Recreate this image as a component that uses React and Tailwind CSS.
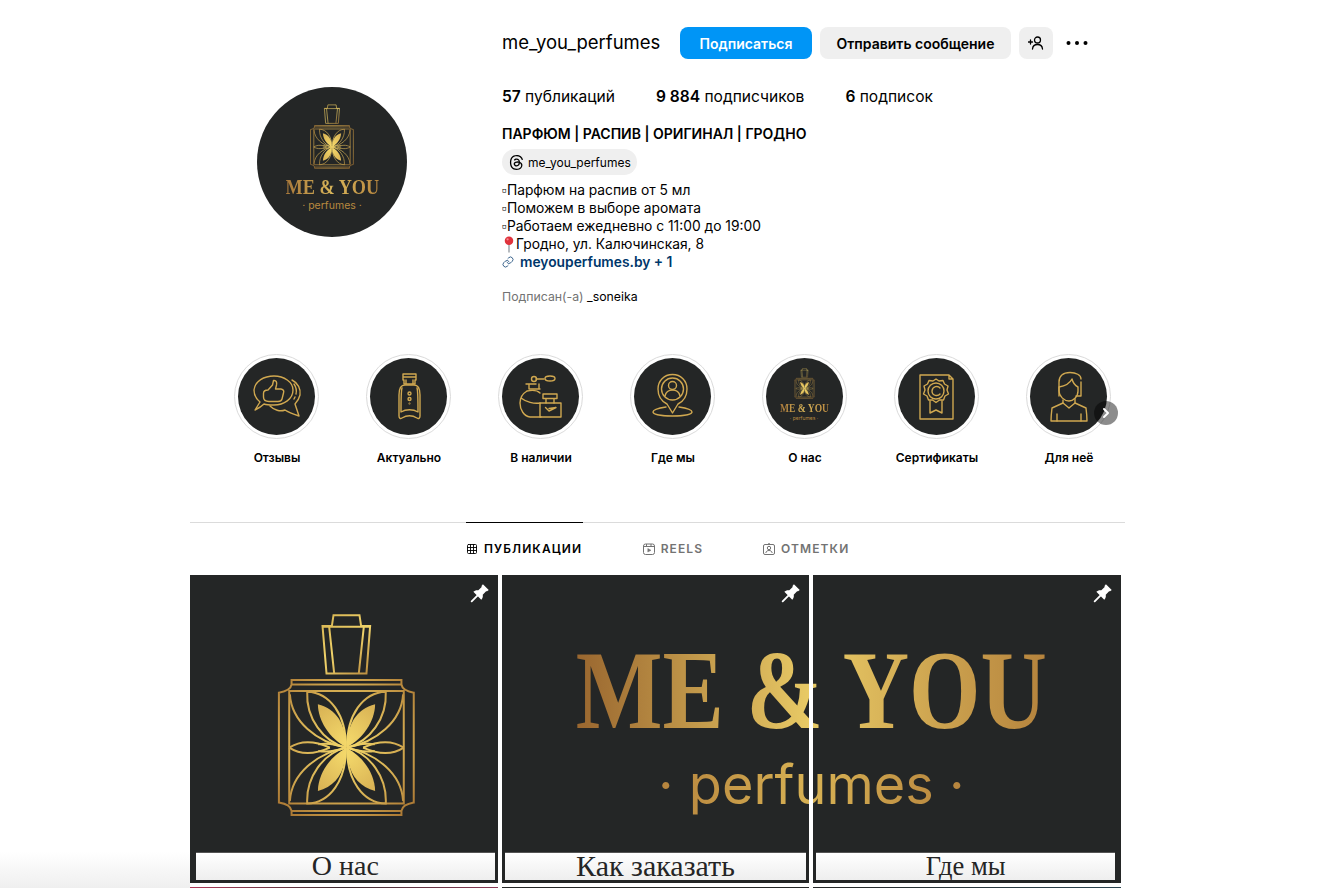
import React from "react";
import { Grid3x3, Link, ChevronRight } from "lucide-react";
import { SiThreads } from "react-icons/si";

const GOLD = "#d0a850";
const FLIPS = ["", "translate(940 0) scale(-1 1)", "translate(0 1036) scale(1 -1)", "translate(940 1036) scale(-1 -1)"];

// perfume bottle, drawn in the coordinates of the big tile (924 units = 308px)
const BottleShape = ({ id }) => (
  <>
    <defs>
      <radialGradient id={id} gradientUnits="userSpaceOnUse" cx="470" cy="500" r="300">
        <stop offset="0" stopColor="#f4d96b" />
        <stop offset="0.55" stopColor="#d2a94f" />
        <stop offset="1" stopColor="#a46f2f" />
      </radialGradient>
      <linearGradient id={id + "-cap"} gradientUnits="userSpaceOnUse" x1="400" y1="120" x2="540" y2="300">
        <stop offset="0" stopColor="#d7b452" />
        <stop offset="0.5" stopColor="#f0d36a" />
        <stop offset="1" stopColor="#b88a3e" />
      </linearGradient>
    </defs>
    <g fill="none" stroke={`url(#${id}-cap)`} strokeWidth="6">
      <path d="M431 120H509L514 153H541L530 295H410L398 153H426Z" />
      <path d="M398 155H541M418 155L433 295M522 155L507 295" />
    </g>
    <g fill="none" stroke={`url(#${id})`} strokeWidth="6">
      <path d="M305 315H635V328C637 342 655 350 672 353V683C655 686 637 694 635 708V720H305V708C303 694 285 686 267 683V353C285 350 303 342 305 328Z" />
      <path d="M298 348H642V686H298ZM305 328H635M305 708H635" />
      {FLIPS.map((t) => (
        <g key={t} transform={t}>
          <path d="M468 518C400 500 348 430 352 350C420 352 470 420 468 518" />
          <path d="M468 518C380 500 305 440 300 358" />
          <path d="M298 518C335 494 380 500 420 518" />
          <path d="M468 518C440 508 410 504 385 508" />
        </g>
      ))}
    </g>
    <g fill={`url(#${id})`}>
      {FLIPS.map((t) => (
        <path key={t} transform={t} d="M467 516C420 490 385 440 384 388C440 402 470 450 467 516Z" />
      ))}
    </g>
  </>
);

const MiniLogo = ({ id, bottleW, bottleH, nameSize, subSize, gap }) => (
  <div className="flex h-full w-full flex-col items-center justify-center">
    <svg width={bottleW} height={bottleH} viewBox="262 115 416 608">
      <BottleShape id={id} />
    </svg>
    <span
      className="scale-x-[0.83] whitespace-nowrap bg-linear-to-r from-[#a8783a] via-[#d9b65a] to-[#b8873f] bg-clip-text font-['Liberation_Serif',serif] font-bold leading-none text-transparent"
      style={{ fontSize: nameSize, marginTop: gap }}
    >
      ME &amp; YOU
    </span>
    <span className="whitespace-nowrap leading-none text-[#b8893f]" style={{ fontSize: subSize, marginTop: gap / 2 }}>
      · perfumes ·
    </span>
  </div>
);

const StoryIcon = ({ children }) => (
  <svg viewBox="0 0 77 77" className="h-full w-full" fill="none" stroke={GOLD} strokeWidth="1.400" strokeLinejoin="round" strokeLinecap="round">
    {children}
  </svg>
);

const stories = [
  {
    label: "Отзывы",
    icon: (
      <StoryIcon>
        <path d="M17 52L22 44C17 40 16 35 16 32C17 23 26 18 36 18C46 18 55 24 55 32C55 41 46 47 36 47C32 47 29 47 26 46C24 48 21 50 17 52Z" />
        <path d="M54 22C60 25 63 31 62 37C61 41 59 44 57 46L61 58C55 56 50 54 47 52C42 54 36 52 32 48" />
        <path d="M56 26C58 29 59 32 58 36M57 39L56 41" />
        <path d="M30 32L34.500 27L35.500 22.500C38.500 22 39 24.500 38.500 27L37.500 31H43C46 31.500 46 33.500 45.500 35L44 41C43.500 43 42 43.500 40 43.500H31C27 43.500 25.500 42 25.500 39V35.500C25.500 33 27.500 32 30 32Z" />
      </StoryIcon>
    ),
  },
  {
    label: "Актуально",
    icon: (
      <StoryIcon>
        <path d="M33 16H46V22H45V26H34V22H33ZM33 19H46M36 22V26M43 22V26" />
        <path d="M29 37C29 31 31 27 35 27H44C48 27 50 31 50 37V58C50 60.500 48.500 61 47 60C42 57 37 57 32 60C30.500 61 29 60.500 29 58Z" />
        <path d="M32 30C31 33 31 45 31 54C36 51 43 51 48 54C48 45 48 33 47 30" />
        <circle cx="39.500" cy="35.500" r="1.500" />
        <circle cx="39.500" cy="41" r="1.500" />
        <circle cx="39.500" cy="45.500" r="0.300" />
      </StoryIcon>
    ),
  },
  {
    label: "В наличии",
    icon: (
      <StoryIcon>
        <path d="M24 26H34M27 26V31M37 31V26M27 31H38" />
        <circle cx="32" cy="21" r="2.500" />
        <path d="M34 21H42" />
        <ellipse cx="48" cy="20.500" rx="5" ry="2.500" />
        <path d="M25 33C20 36 18 41 18 45C18 52 22 58 28 59H39M38 35C35 32 30 32 25 33M38 45C32 46 24 44 19 40" />
        <path d="M41 36H55V40.500H41ZM44 40.500V45M52 40.500V45" />
        <path d="M38 45H59V59H38Z" />
        <path d="M43.500 49.500L47 53L54 49.500L47 50.500" />
      </StoryIcon>
    ),
  },
  {
    label: "Где мы",
    icon: (
      <StoryIcon>
        <path d="M33 46C27 43 24 37 24 31C24 23 30 16.500 38.500 16.500C47 16.500 53 23 53 31C53 37 50 43 44 46L38.500 55Z" />
        <circle cx="38.500" cy="31" r="11" />
        <circle cx="38.500" cy="27.500" r="4" />
        <path d="M31 38C32 33.500 35 32 38.500 32C42 32 45 33.500 46 38" />
        <path d="M32 49C25 50 19 51.500 19 54C19 56.500 28 58 38.500 58C49 58 58 56.500 58 54C58 51.500 52 50 45 49" />
      </StoryIcon>
    ),
  },
  {
    label: "О нас",
    icon: (
      <div className="h-full w-full pb-[4px]">
        <MiniLogo id="story-logo" bottleW={21} bottleH={31} nameSize="11.500px" subSize="5px" gap={4} />
      </div>
    ),
  },
  {
    label: "Сертификаты",
    icon: (
      <StoryIcon>
        <path d="M22 17H51L55 21V61H22ZM51 17V21H55" />
        <path d="M38 21L41 23L45 22.500L46.500 26L50 28L49 32L50.500 36L47 38L45.500 42L41.500 42L38 44.500L34.500 42L30.500 42L29 38L25.500 36L27 32L26 28L29.500 26L31 22.500L35 23Z" />
        <circle cx="38" cy="33" r="8" />
        <path d="M42 30C40 27.500 34.500 28 34 33C34 38 40 38.500 42 36" />
        <path d="M32 43V55L38 52L44 55V43" />
      </StoryIcon>
    ),
  },
  {
    label: "Для неё",
    icon: (
      <StoryIcon>
        <path d="M29 38V24C29 18 33 14.500 40 14.500C46 14.500 51 17 51 21M51 24V38H46" />
        <path d="M29 29C35 28 40 25 42 21C43 25 46 28 48 29V33C48 39 43 43 39 43C34 43 29 38 29 33Z" />
        <path d="M33 42V45L22 50C21.500 54 21 58 21 63H57C57 58 56.500 54 56 50L45 45V41" />
        <path d="M33 45L39 50L45 45M27 56V63M51 56V63" />
      </StoryIcon>
    ),
  },
];

const PinIcon = () => (
  <svg viewBox="0 0 24 24" className="absolute right-2 top-2 h-5 w-5" fill="#fff">
    <path d="M15.500 1.500L22.500 8.500L20.500 10L19.300 9.800L15.300 14C15.800 16.500 15 18.500 13.500 20L4 10.500C5.500 9 7.500 8.300 10 8.700L14 4.700L13.800 3.500Z" />
    <path d="M9.500 14.500L2 22" stroke="#fff" strokeWidth="2.200" strokeLinecap="round" />
  </svg>
);

const Caption = ({ className, children }) => (
  <div className={`absolute bottom-[3px] flex h-[28px] items-center justify-center border-t border-[#555] bg-linear-to-b from-white to-[#eeeeee] pb-px font-['Liberation_Serif',serif] leading-none text-[#252525] ${className}`}>
    {children}
  </div>
);

const App = () => {
  return (
    <div className="relative h-screen overflow-hidden bg-white pl-[190px] font-[Inter,'Liberation_Sans',sans-serif] text-[#000]">
      <div className="w-[935px]">
        {/* header */}
        <header className="flex items-start pt-[27px]">
          <div className="mt-[60px] ml-[67px] mr-[95px] h-[150px] w-[150px] shrink-0 overflow-hidden rounded-full bg-[#242626] pb-[9px]">
            <MiniLogo id="avatar-logo" bottleW={44} bottleH={65} nameSize="22px" subSize="10.500px" gap={7} />
          </div>
          <div className="flex-1">
            <div className="flex h-[32px] items-center">
              <h1 className="mr-[20px] w-[158px] whitespace-nowrap text-[18.500px]">me_you_perfumes</h1>
              <button className="h-[32px] w-[132px] rounded-lg bg-[#0095f6] text-[14px] font-semibold text-white">Подписаться</button>
              <button className="ml-2 h-[32px] w-[191px] rounded-lg bg-[#efefef] text-[14px] font-semibold">Отправить сообщение</button>
              <button className="ml-2 flex h-[32px] w-[34px] items-center justify-center rounded-lg bg-[#efefef]">
                <svg viewBox="0 0 16 16" className="h-4 w-4" fill="none" stroke="#000" strokeWidth="1.300" strokeLinecap="round">
                  <path d="M0.500 7H4.500M2.500 5V9" />
                  <circle cx="9.500" cy="5" r="3" />
                  <path d="M4.500 14C4.800 10.500 7 9.500 9.500 9.500C12 9.500 14.200 10.500 14.500 14" />
                </svg>
              </button>
              <svg viewBox="0 0 24 24" className="ml-[12px] h-6 w-6" fill="#000">
                <circle cx="3.500" cy="12" r="2" />
                <circle cx="12" cy="12" r="2" />
                <circle cx="20.500" cy="12" r="2" />
              </svg>
            </div>

            <div className="mt-[28px] flex gap-[41px] text-[15.550px] leading-[20px]">
              <span><b className="font-semibold">57</b> публикаций</span>
              <span><b className="font-semibold">9 884</b> подписчиков</span>
              <span><b className="font-semibold">6</b> подписок</span>
            </div>

            <div className="mt-[18px] text-[14px] font-semibold leading-[18px]">ПАРФЮМ | РАСПИВ | ОРИГИНАЛ | ГРОДНО</div>

            <div className="mt-[6px] flex h-[26px] w-[135px] items-center gap-[4px] rounded-full bg-[#efefef] pl-[7px] pt-px text-[12px]">
              <SiThreads className="h-[15px] w-[15px] shrink-0" />
              <span>me_you_perfumes</span>
            </div>

            <div className="mt-[6px] text-[13.800px] leading-[18px]">
              <div>▫Парфюм на распив от 5 мл</div>
              <div>▫Поможем в выборе аромата</div>
              <div>▫Работаем ежедневно с 11:00 до 19:00</div>
              <div className="flex items-center">
                <svg viewBox="0 0 14 18" className="h-[17px] w-[14px] shrink-0">
                  <path d="M7 8V17.500" stroke="#9aa0a6" strokeWidth="1.500" />
                  <circle cx="7" cy="5" r="4.500" fill="#e0323c" />
                  <circle cx="5.500" cy="3.500" r="1.200" fill="#f58a90" />
                </svg>
                Гродно, ул. Калючинская, 8
              </div>
              <div className="flex items-center gap-[6px] font-semibold text-[#00376b]">
                <Link size={12} strokeWidth={1.500} />
                meyouperfumes.by + 1
              </div>
            </div>

            <div className="mt-[18px] text-[12.300px] leading-[16px] text-[#737373]">
              Подписан(-а) <span className="text-black">_soneika</span>
            </div>
          </div>
        </header>

        {/* highlights */}
        <section className="relative mt-[49px] flex pl-[20px]">
          {stories.map((s) => (
            <div key={s.label} className="flex w-[132px] shrink-0 flex-col items-center">
              <div className="flex h-[85px] w-[85px] items-center justify-center rounded-full border border-[#dbdbdb] bg-white">
                <div className="h-[77px] w-[77px] overflow-hidden rounded-full bg-[#242626]">{s.icon}</div>
              </div>
              <div className="mt-[11px] pl-[2px] text-[12px] font-semibold leading-[16px]">{s.label}</div>
            </div>
          ))}
          <div className="absolute left-[904px] top-[47px] flex h-[24px] w-[24px] items-center justify-center rounded-full bg-black/45">
            <ChevronRight size={16} strokeWidth={3} className="text-white" />
          </div>
        </section>

        {/* tabs */}
        <nav className="mt-[56px] flex h-[53px] justify-center gap-[60px] border-t border-[#dbdbdb] text-[12px] font-semibold uppercase leading-none tracking-[1.100px] text-[#737373]">
          <div className="-mt-px flex h-[53px] w-[117px] items-center justify-center gap-[6px] border-t border-black text-black">
            <Grid3x3 size={12} strokeWidth={1.800} />
            Публикации
          </div>
          <div className="flex items-center gap-[6px]">
            <svg viewBox="0 0 12 12" className="h-3 w-3" fill="none" stroke="#737373" strokeWidth="1">
              <rect x="0.500" y="1" width="11" height="10.500" rx="2" />
              <path d="M0.500 3.500H11.500M3.500 1V3.500M8 1V3.500" />
              <path d="M4.800 5.500L8 7.300L4.800 9Z" fill="#737373" strokeWidth="0.500" />
            </svg>
            Reels
          </div>
          <div className="flex items-center gap-[6px]">
            <svg viewBox="0 0 12 12" className="h-3 w-3" fill="none" stroke="#737373" strokeWidth="1">
              <rect x="0.500" y="1.500" width="11" height="10" rx="1.500" />
              <path d="M4.500 1.500L6 0.500L7.500 1.500" />
              <circle cx="6" cy="5" r="1.700" />
              <path d="M2.800 10C3.200 8 4.500 7.500 6 7.500C7.500 7.500 8.800 8 9.200 10" />
            </svg>
            Отметки
          </div>
        </nav>

        {/* posts */}
        <section className="grid w-[931px] grid-cols-3 gap-[4px]">
          <div className="relative h-[308px] bg-[#242626]">
            <svg viewBox="0 0 924 924" className="block h-full w-full">
              <BottleShape id="post-logo" />
            </svg>
            <PinIcon />
            <Caption className="left-[6px] right-[3px] text-[28px]">О нас</Caption>
          </div>

          {/* the wordmark runs across these two tiles */}
          <div className="relative col-span-2 grid h-[308px] grid-cols-2 gap-[4px]">
            <div className="relative bg-[#242626]">
              <PinIcon />
              <Caption className="left-[3px] right-[3px] text-[30px]">Как заказать</Caption>
            </div>
            <div className="relative bg-[#242626]">
              <PinIcon />
              <Caption className="left-[3px] right-[6px] text-[26.500px]">Где мы</Caption>
            </div>
            <div className="pointer-events-none absolute inset-x-0 top-[60px] flex flex-col items-center">
              <span className="scale-x-[0.82] whitespace-nowrap bg-linear-to-r from-[#99662f] via-[#e9cb66] to-[#b5833d] bg-clip-text font-['Liberation_Serif',serif] text-[112px] font-bold leading-[110px] text-transparent">
                ME &amp; YOU
              </span>
              <span className="mt-[10px] whitespace-nowrap bg-linear-to-r from-[#b5833d] via-[#d8b254] to-[#b5833d] bg-clip-text text-[54px] font-normal leading-[60px] text-transparent">
                · perfumes ·
              </span>
            </div>
            <div className="pointer-events-none absolute inset-y-0 left-1/2 w-[4px] -translate-x-1/2 bg-white" />
          </div>

          <div className="h-[308px] bg-linear-to-r from-[#b03a5a] via-[#3a2a30] to-[#8a3a55]" />
          <div className="h-[308px] bg-[#242626]" />
          <div className="h-[308px] bg-linear-to-r from-[#242626] to-[#2a4450]" />
        </section>
      </div>

      {/* soft shadow at the bottom edge of the window */}
      <div className="pointer-events-none absolute bottom-0 left-0 h-[36px] w-[190px] bg-linear-to-t from-[#efefef] to-transparent" />
    </div>
  );
};

export default App;
